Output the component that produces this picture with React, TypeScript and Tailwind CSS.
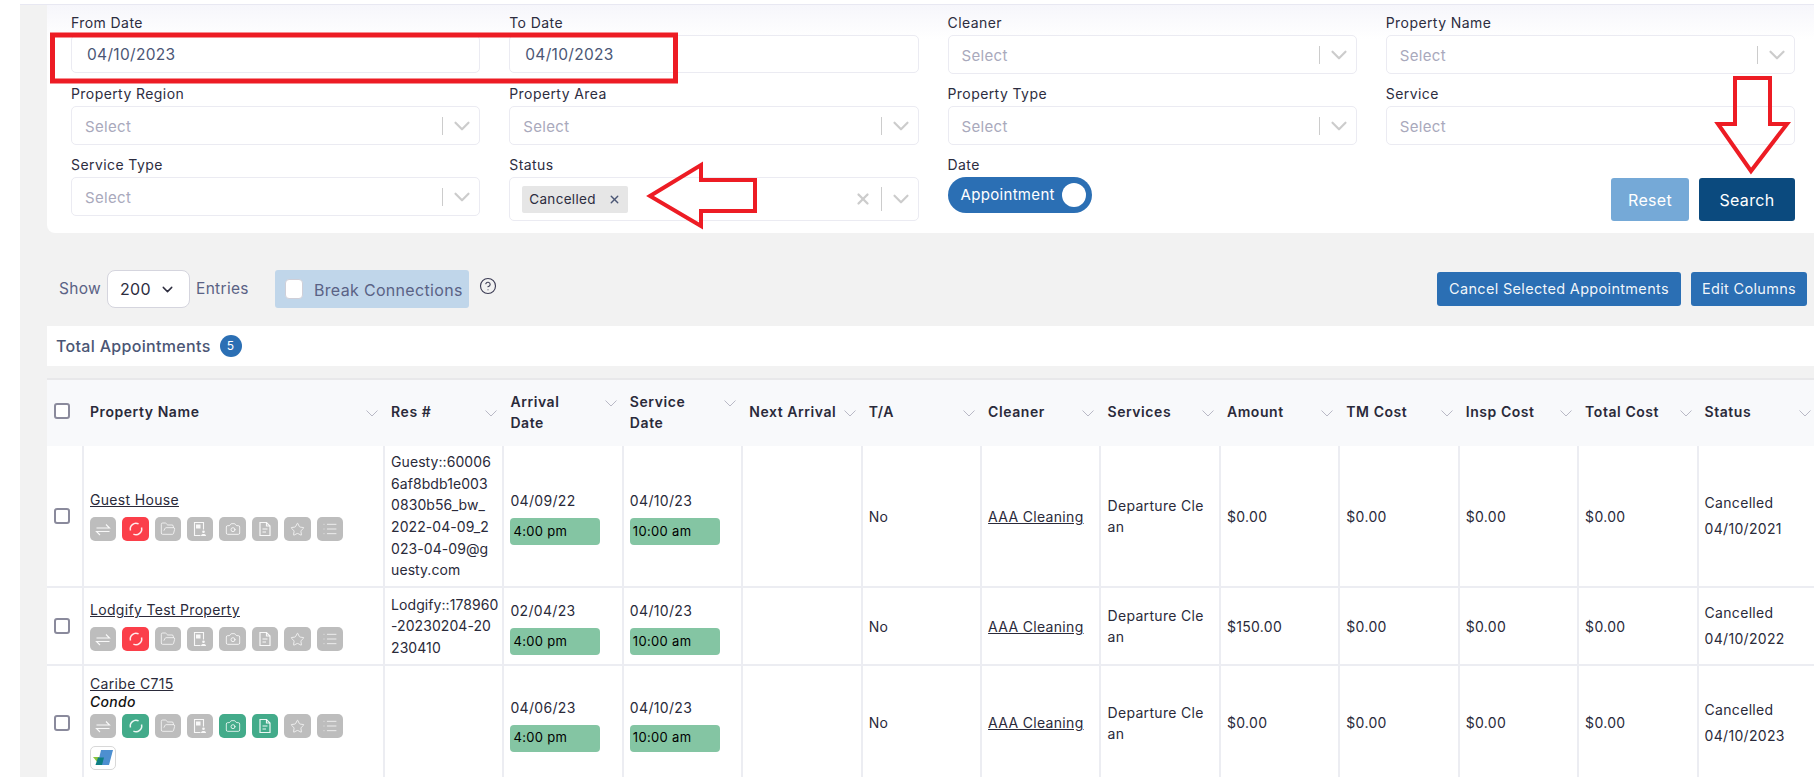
import { Camera, ChevronDown, CircleHelp, FolderOpen, List, Star, X } from "lucide-react";
import type { ReactNode } from "react";

const Swap = () => (
  <svg width="16" height="15" viewBox="0 0 16 15" fill="none" stroke="currentColor" strokeWidth="1.1">
    <path d="M1.500 6h13L11 2.500" />
    <path d="M14.500 9.500h-13L5 13" />
  </svg>
);

const Sync = () => (
  <svg width="16" height="16" viewBox="0 0 16 16" fill="none" stroke="currentColor" strokeWidth="1.5">
    <path d="M2.500 9.500A5.700 5.700 0 0 1 10.600 2.900" />
    <path d="M13.500 6.500A5.700 5.700 0 0 1 5.400 13.100" />
  </svg>
);

const FileUser = () => (
  <svg width="14" height="16" viewBox="0 0 14 16" fill="none" stroke="currentColor" strokeWidth="1.1">
    <path d="M7.500 14.500H1.500V1.500h9v7" />
    <rect x="3" y="3.500" width="4.500" height="4" fill="currentColor" stroke="none" />
    <circle cx="10.500" cy="10.800" r="1.300" fill="currentColor" stroke="none" />
    <path d="M8 15c0-2.600 5-2.600 5 0z" fill="currentColor" stroke="none" />
  </svg>
);

const FileLines = () => (
  <svg width="14" height="16" viewBox="0 0 14 16" fill="none" stroke="currentColor" strokeWidth="1.2">
    <path d="M2 1.500h6.500L12 5v9.500H2z" />
    <path d="M8.500 1.500V5H12" />
    <path d="M4.500 8h5M4.500 11h3.500" />
  </svg>
);

const Logo = () => (
  <svg width="20" height="16" viewBox="0 0 20 16">
    <path d="M8 0h12l-4 15H4.500z" fill="#4d8fd0" />
    <path d="M0 7h7l-2 6z" fill="#8cc63f" />
    <path d="M5 7.500h6l-2 7.500H2.500z" fill="#0d7f83" />
  </svg>
);

const tools: (() => ReactNode)[] = [
  () => <Swap />,
  () => <Sync />,
  () => <FolderOpen size={16} strokeWidth={1.2} />,
  () => <FileUser />,
  () => <Camera size={16} strokeWidth={1.3} />,
  () => <FileLines />,
  () => <Star size={15} strokeWidth={1.3} />,
  () => <List size={16} strokeWidth={1.2} />,
];

const toolWidths = ["w-[26px]", "w-[27px]", "w-[26px]", "w-[26px]", "w-[27px]", "w-[26px]", "w-[27px]", "w-[26px]"];

const ToolRow = ({ sync, green }: { sync: string; green: number[] }) => (
  <div className="flex gap-[6px]">
    {tools.map((Icon, i) => {
      const bg = i === 1 ? sync : green.includes(i) ? "bg-[#43ab8a]" : "bg-[#bdbdbd]";
      return (
        <span key={i} className={`h-[24px] ${toolWidths[i]} ${bg} rounded-[5px] flex items-center justify-center text-white/90`}>
          <Icon />
        </span>
      );
    })}
  </div>
);

const Field = ({ label, children }: { label: string; children: ReactNode }) => (
  <div>
    <div className="text-[14px] leading-[21px] text-[#2d2d3f] tracking-[0.03em]">{label}</div>
    <div className="mt-[2px]">{children}</div>
  </div>
);

const Select = ({ noIndicator }: { noIndicator?: boolean }) => (
  <div className="h-[39px] bg-white border border-[#ebebf2] rounded-[5px] flex items-center pl-[13px]">
    <span className="pt-[4px] text-[15px] text-[#a9a9bc]">Select</span>
    {!noIndicator && (
      <div className="flex items-center ml-auto">
        <span className="w-[1px] h-[18px] bg-[#cccccc]" />
        <ChevronDown size={26} strokeWidth={2} className="text-[#cccccc] ml-[6px] mr-[4px]" />
      </div>
    )}
  </div>
);

const DateInput = ({ value }: { value: string }) => (
  <div className="h-[38px] bg-white border border-[#ebebf2] rounded-[5px] flex items-center pl-[15px] pt-[2px] text-[15.5px] text-[#4b5675]">
    {value}
  </div>
);

const Chev = ({ className = "" }: { className?: string }) => (
  <svg width="12" height="7" viewBox="0 0 12 7" fill="none" stroke="#b9b9c6" strokeWidth="1" className={`shrink-0 ${className}`}>
    <path d="M0.500 0.500 6 6 11.500 0.500" />
  </svg>
);

const headers = [
  "Property Name",
  "Res #",
  "Arrival|Date",
  "Service|Date",
  "Next Arrival",
  "T/A",
  "Cleaner",
  "Services",
  "Amount",
  "TM Cost",
  "Insp Cost",
  "Total Cost",
  "Status",
];

type Row = {
  name: string;
  sub?: string;
  sync: string;
  green: number[];
  logo?: boolean;
  res: string[];
  arrival: string;
  service: string;
  amount: string;
  cancelled: string;
  height: string;
};

const rows: Row[] = [
  {
    name: "Guest House",
    sync: "bg-[#fb3f4a]",
    green: [],
    res: ["Guesty::60006", "6af8bdb1e003", "0830b56_bw_", "2022-04-09_2", "023-04-09@g", "uesty.com"],
    arrival: "04/09/22",
    service: "04/10/23",
    amount: "$0.00",
    cancelled: "04/10/2021",
    height: "h-[141px]",
  },
  {
    name: "Lodgify Test Property",
    sync: "bg-[#fb3f4a]",
    green: [],
    res: ["Lodgify::178960", "-20230204-20", "230410"],
    arrival: "02/04/23",
    service: "04/10/23",
    amount: "$150.00",
    cancelled: "04/10/2022",
    height: "h-[78px]",
  },
  {
    name: "Caribe C715",
    sub: "Condo",
    sync: "bg-[#43ab8a]",
    green: [4, 5],
    logo: true,
    res: [],
    arrival: "04/06/23",
    service: "04/10/23",
    amount: "$0.00",
    cancelled: "04/10/2023",
    height: "h-[114px]",
  },
];

const TimeCell = ({ date, time }: { date: string; time: string }) => (
  <td className="border-l-2 border-[#ecedf2] px-[6px] pt-[3px] align-middle">
    <div className="leading-[21px]">{date}</div>
    <div className="mt-[7px] h-[27px] w-[90px] bg-[#84c5a3] rounded-[4px] flex items-center pl-[3px] text-[13px] text-black">{time}</div>
  </td>
);

const Plain = ({ children }: { children?: ReactNode }) => (
  <td className="border-l-2 border-[#ecedf2] px-[6px] align-middle leading-[21px]">{children}</td>
);

export default function App() {
  return (
    <div className="relative h-[777px] w-[1814px] overflow-hidden flex bg-white font-[Inter,sans-serif] tracking-[0.02em]">
      <div className="w-[20px] shrink-0 bg-white" />
      <div className="flex-1 min-w-0 bg-[#f2f2f2] flex flex-col">
        <div className="h-[5px] shrink-0 bg-white border-b border-[#e8e8f2]" />

        <section className="ml-[27px] h-[228px] shrink-0 bg-gradient-to-b from-[#f6f6fb] to-white to-[15%] rounded-bl-[8px] pl-[24px] pr-[19px] pt-[7px]">
          <div className="grid grid-cols-4 gap-x-[29px] auto-rows-[71px]">
            <Field label="From Date"><DateInput value="04/10/2023" /></Field>
            <Field label="To Date"><DateInput value="04/10/2023" /></Field>
            <Field label="Cleaner"><Select /></Field>
            <Field label="Property Name"><Select /></Field>
            <Field label="Property Region"><Select /></Field>
            <Field label="Property Area"><Select /></Field>
            <Field label="Property Type"><Select /></Field>
            <Field label="Service"><Select noIndicator /></Field>
            <Field label="Service Type"><Select /></Field>
            <Field label="Status">
              <div className="h-[44px] bg-white border border-[#ebebf2] rounded-[5px] flex items-center pl-[12px]">
                <span className="h-[27px] w-[106px] bg-[#e6e6e6] rounded-[2px] flex items-center pl-[7px] text-[13.5px] text-[#2d2d3f]">
                  Cancelled
                  <X size={13} strokeWidth={2.5} className="ml-auto mr-[7px] text-[#4b5675]" />
                </span>
                <X size={18} strokeWidth={3} className="ml-auto mr-[9px] text-[#cccccc]" />
                <span className="w-[1px] h-[24px] bg-[#cccccc]" />
                <ChevronDown size={26} strokeWidth={2} className="text-[#cccccc] ml-[6px] mr-[4px]" />
              </div>
            </Field>
            <Field label="Date">
              <div className="h-[36px] w-[144px] bg-[#2b6fb4] rounded-full flex items-center justify-between pl-[13px] pr-[6px] text-[15px] text-white">
                Appointment
                <span className="w-[24px] h-[24px] rounded-full bg-white" />
              </div>
            </Field>
            <div className="flex justify-end gap-[10px] pt-[24px]">
              <button className="h-[43px] w-[78px] bg-[#75a9d7] rounded-[3px] text-[16px] text-white">Reset</button>
              <button className="h-[43px] w-[96px] bg-[#0b4a7e] rounded-[3px] text-[16px] text-white">Search</button>
            </div>
          </div>
        </section>

        <div className="ml-[27px] mr-[7px] mt-[37px] h-[38px] shrink-0 flex items-center text-[15.5px] text-[#5a6285]">
          <span className="ml-[12px] w-[48px]">Show</span>
          <div className="h-[38px] w-[83px] bg-white border border-[#d5d5de] rounded-[8px] flex items-center pl-[12px] text-[16px] text-[#2d2d3f]">
            200
            <ChevronDown size={17} strokeWidth={2} className="ml-[8px]" />
          </div>
          <span className="ml-[6px] w-[79px]">Entries</span>
          <div className="h-[38px] w-[194px] bg-[#c0d6ea] rounded-[3px] flex items-center pl-[10px]">
            <span className="w-[18px] h-[20px] bg-white border border-[#cfcfd8] rounded-[4px]" />
            <span className="ml-[11px] pt-[2px] whitespace-nowrap text-[16px]">Break Connections</span>
          </div>
          <CircleHelp size={18} strokeWidth={1.5} className="ml-[10px] -mt-[7px] text-[#3d3d55]" />
          <button className="ml-auto h-[34px] w-[244px] bg-[#2b6fb4] rounded-[3px] text-[14.5px] text-white/95">Cancel Selected Appointments</button>
          <button className="ml-[10px] h-[34px] w-[116px] bg-[#2b6fb4] rounded-[3px] text-[14.5px] text-white/95">Edit Columns</button>
        </div>

        <div className="ml-[27px] mt-[18px] h-[40px] shrink-0 bg-white flex items-center pl-[9px] text-[16px] text-[#4b5675] font-medium">
          Total Appointments
          <span className="ml-[9px] w-[22px] h-[22px] rounded-full bg-[#2b6fb4] flex items-center justify-center text-[12px] text-white font-normal">5</span>
        </div>

        <div className="ml-[27px] mt-[12px] flex-1 min-h-0 overflow-hidden">
          <table className="table-fixed border-collapse w-[1770px] bg-white text-[14px] text-[#2a2a3a]">
            <colgroup>
              <col className="w-[36px]" />
              <col className="w-[301px]" />
              {headers.slice(1).map((h) => (
                <col key={h} className="w-[119.4px]" />
              ))}
            </colgroup>
            <thead>
              <tr className="h-[67px] bg-[#f8f9fb] border-t-2 border-[#e8e8ea]">
                <th className="pl-[7px] text-left align-middle">
                  <span className="block w-[16px] h-[16px] -mt-[4px] bg-white border-2 border-[#8a8a9c] rounded-[3px]" />
                </th>
                {headers.map((h) => {
                  const two = h.includes("|");
                  return (
                    <th key={h} className={`pl-[7px] pr-[6px] text-left font-semibold tracking-[0.04em] ${two ? "pb-[2px]" : "pb-[4px]"}`}>
                      <div className="flex items-center justify-between leading-[21px]">
                        <span className="whitespace-nowrap">
                          {h.split("|").map((line) => (
                            <span key={line} className="block">{line}</span>
                          ))}
                        </span>
                        <Chev className={two ? "-mt-[18px]" : "mt-[4px]"} />
                      </div>
                    </th>
                  );
                })}
              </tr>
            </thead>
            <tbody>
              {rows.map((r) => (
                <tr key={r.name} className={`${r.height} border-b-2 border-[#ecedf2] last:border-b-0`}>
                  <td className="pl-[7px] align-middle">
                    <span className="block w-[16px] h-[16px] bg-white border-2 border-[#8a8a9c] rounded-[3px]" />
                  </td>
                  <td className="border-l-2 border-[#ecedf2] px-[6px] align-middle">
                    <div className="underline leading-[18px]">{r.name}</div>
                    {r.sub && <div className="italic font-medium text-[14px] leading-[17px] text-[#111]">{r.sub}</div>}
                    <div className={r.sub ? "mt-[4px]" : "mt-[8px]"}>
                      <ToolRow sync={r.sync} green={r.green} />
                    </div>
                    {r.logo && (
                      <span className="mt-[8px] w-[26px] h-[24px] border border-[#d8d8d8] rounded-[5px] flex items-center justify-center">
                        <Logo />
                      </span>
                    )}
                  </td>
                  <td className="border-l-2 border-[#ecedf2] px-[6px] align-middle leading-[21.6px] tracking-[0.005em]">
                    {r.res.map((line) => (
                      <span key={line} className="block whitespace-nowrap">{line}</span>
                    ))}
                  </td>
                  <TimeCell date={r.arrival} time="4:00 pm" />
                  <TimeCell date={r.service} time="10:00 am" />
                  <Plain />
                  <Plain>No</Plain>
                  <Plain><span className="underline">AAA Cleaning</span></Plain>
                  <Plain>
                    <span className="block whitespace-nowrap">Departure Cle</span>
                    <span className="block">an</span>
                  </Plain>
                  <Plain>{r.amount}</Plain>
                  <Plain>$0.00</Plain>
                  <Plain>$0.00</Plain>
                  <Plain>$0.00</Plain>
                  <td className="border-l-2 border-[#ecedf2] px-[6px] align-middle leading-[26px]">
                    <div>Cancelled</div>
                    <div>{r.cancelled}</div>
                  </td>
                </tr>
              ))}
            </tbody>
          </table>
        </div>
      </div>

      {/* red annotations drawn over the page */}
      <svg width="1814" height="777" viewBox="0 0 1814 777" fill="none" stroke="#ed1c24" className="absolute inset-0 pointer-events-none">
        <rect x="52.500" y="35" width="623" height="46" strokeWidth="5" />
        <path d="M650 196 701 165V180H755V211H701V226Z" strokeWidth="4" />
        <path d="M1735 78H1770V124H1787L1751 171 1718 124H1735Z" strokeWidth="4" />
      </svg>
    </div>
  );
}
